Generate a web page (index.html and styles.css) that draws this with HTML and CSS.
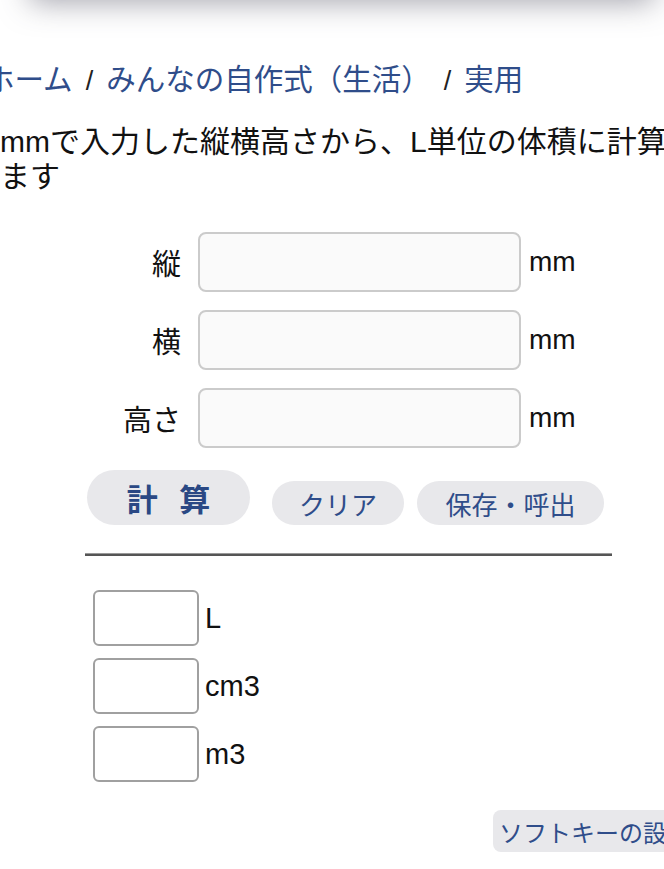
FILE: index.html
```html
<!DOCTYPE html>
<html lang="ja">
<head>
<meta charset="utf-8">
<title>体積計算</title>
<link rel="stylesheet" href="styles.css">
</head>
<body>
<div class="topbar"></div>
<div class="page">
  <nav class="crumbs">
    <a class="crumb" href="#">ホーム</a><span class="sep">/</span><a class="crumb" href="#">みんなの自作式（生活）</a><span class="sep">/</span><a class="crumb" href="#">実用</a>
  </nav>
  <p class="desc">mmで入力した縦横高さから、L単位の体積に計算します</p>

  <div class="form">
    <div class="row">
      <label class="lbl">縦</label>
      <input class="field" type="text">
      <span class="unit">mm</span>
    </div>
    <div class="row">
      <label class="lbl">横</label>
      <input class="field" type="text">
      <span class="unit">mm</span>
    </div>
    <div class="row">
      <label class="lbl">高さ</label>
      <input class="field" type="text">
      <span class="unit">mm</span>
    </div>
  </div>

  <div class="buttons">
    <button class="btn btn-main">計 算</button>
    <button class="btn btn-clear">クリア</button>
    <button class="btn btn-save">保存・呼出</button>
  </div>

  <div class="rule"></div>

  <div class="results">
    <div class="res-row"><input class="res" type="text"><span class="res-unit">L</span></div>
    <div class="res-row"><input class="res" type="text"><span class="res-unit">cm3</span></div>
    <div class="res-row"><input class="res" type="text"><span class="res-unit">m3</span></div>
  </div>

  <div class="softkey-wrap">
    <button class="softkey">ソフトキーの設定</button>
  </div>
</div>
</body>
</html>
```

FILE: styles.css
```css
html, body {
  margin: 0;
  padding: 0;
  background: #fff;
  overflow: hidden;
}
body {
  width: 664px;
  height: 869px;
  font-family: "Liberation Sans", "Noto Sans CJK JP", sans-serif;
  color: #111;
}
.topbar {
  height: 60px;
  margin: -60px 10px 0 30px;
  background: #fff;
  box-shadow: 0 2px 30px rgba(70, 70, 90, 0.5);
}
.page {
  margin-left: -15px;
  width: 740px;
}
.crumbs {
  margin-top: 60px;
  font-size: 29.5px;
  line-height: 40px;
  white-space: nowrap;
}
.crumb {
  color: #2f4d8a;
  text-decoration: none;
}
.sep {
  color: #222;
  margin: 0 13px;
  font-size: 27px;
}
.desc {
  margin: 23px 0 0 15px;
  font-size: 30px;
  line-height: 35px;
  width: 712px;
}
.form {
  margin-top: 38px;
  padding-left: 116px;
  display: flex;
  flex-direction: column;
  gap: 18px;
}
.row {
  display: flex;
  align-items: center;
}
.lbl {
  width: 80px;
  text-align: right;
  font-size: 29px;
  margin-right: 17px;
}
.field {
  box-sizing: border-box;
  width: 323px;
  height: 60px;
  border: 2px solid #cbcbcb;
  border-radius: 8px;
  background: #fafafa;
  margin: 0;
}
.unit {
  margin-left: 8px;
  font-size: 28px;
}
.buttons {
  margin-top: 22px;
  padding-left: 102px;
  display: flex;
  align-items: flex-end;
}
.btn {
  font-family: "Liberation Sans", "Noto Sans CJK JP", sans-serif;
  border: none;
  background: #e8e8eb;
  color: #2f4d8a;
  border-radius: 24px;
  height: 44px;
  font-size: 26px;
  padding: 0;
  margin: 0;
}
.btn-main {
  width: 163px;
  height: 55px;
  border-radius: 28px;
  font-size: 31px;
  font-weight: bold;
  word-spacing: 13px;
  margin-right: 22px;
  color: #2a4884;
}
.btn-clear {
  width: 132px;
  margin-right: 13px;
}
.btn-save {
  width: 187px;
}
.rule {
  margin: 28px 0 0 100px;
  width: 527px;
  height: 3px;
  background: #555;
  border-top: 1px solid #999;
  box-sizing: border-box;
}
.results {
  margin-top: 34px;
  padding-left: 108px;
  display: flex;
  flex-direction: column;
  gap: 12px;
}
.res-row {
  display: flex;
  align-items: center;
}
.res {
  box-sizing: border-box;
  width: 106px;
  height: 56px;
  border: 2px solid #a0a0a0;
  border-radius: 6px;
  background: #fff;
  margin: 0;
}
.res-unit {
  margin-left: 6px;
  font-size: 29px;
}
.softkey-wrap {
  margin-top: 28px;
  padding-left: 508px;
}
.softkey {
  font-family: "Liberation Sans", "Noto Sans CJK JP", sans-serif;
  border: none;
  background: #e8e8eb;
  color: #2f4d8a;
  border-radius: 8px;
  height: 42px;
  font-size: 24px;
  padding: 0 6px;
  white-space: nowrap;
}
```
